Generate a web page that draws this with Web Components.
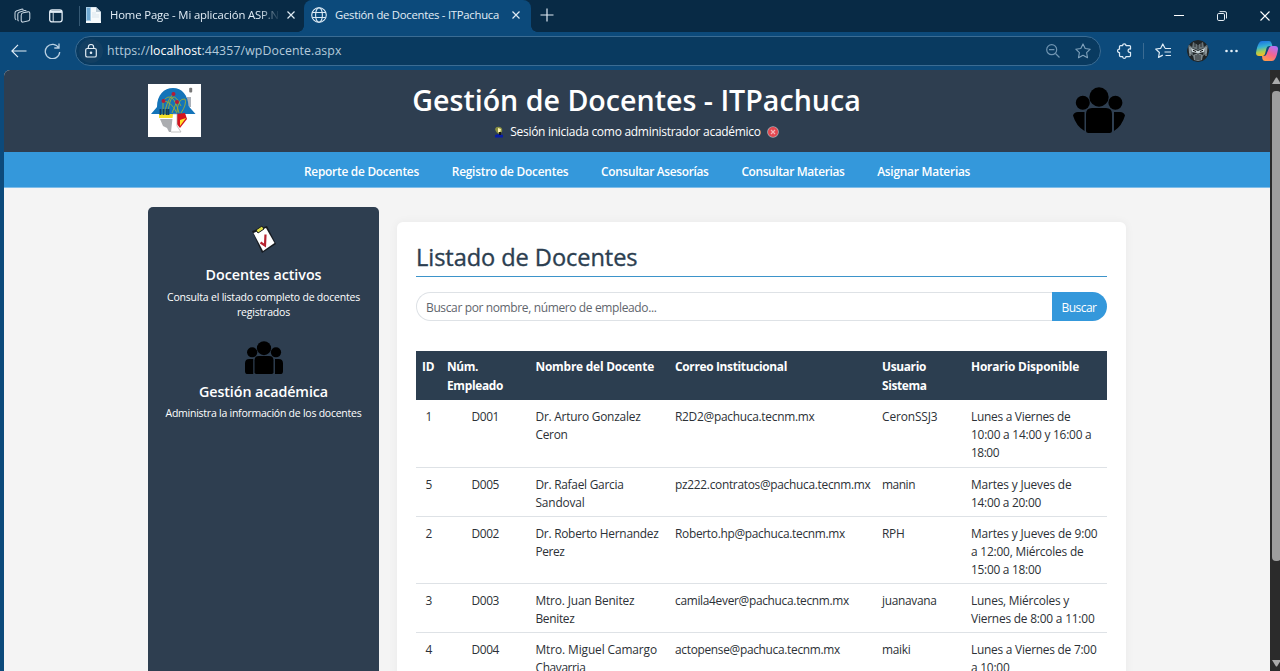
<!DOCTYPE html>
<html lang="es">
<head>
<meta charset="utf-8">
<title>Gestión de Docentes - ITPachuca</title>
<style>
html,body{margin:0;height:100%;overflow:hidden;background:#0c4a7b}
body{font-family:"Open Sans","Noto Sans",sans-serif;font-size:11.6px;color:#212529}
</style>
</head>
<body>
<browser-window>
  <tab-strip slot="chrome"></tab-strip>
  <address-bar slot="chrome"></address-bar>
  <docentes-page></docentes-page>
</browser-window>
<script>
class Base extends HTMLElement{
  constructor(){super();this.attachShadow({mode:'open'});}
  render(css,html){const t=document.createElement('template');t.innerHTML=`<style>*{box-sizing:border-box}svg{display:block;flex:none}${css}</style>${html}`;this.shadowRoot.replaceChildren(t.content.cloneNode(true));}
}
/* A single line of text whose tracking is tuned to a given measure. */
class FitText extends Base{
  connectedCallback(){
    this.render(':host{display:inline-block;white-space:nowrap;vertical-align:top;text-align:left}span{display:inline-block}','<span><slot></slot></span>');
    const w=+this.getAttribute('w');if(!w)return;
    const s=this.shadowRoot.querySelector('span');
    const nat=s.getBoundingClientRect().width,n=this.textContent.length;
    if(nat){s.style.letterSpacing=((w-nat)/n)+'px';this.style.width=w+'px';}
  }
}
customElements.define('fit-text',FitText);

const people=`<g fill="#000"><circle cx="26" cy="10" r="9.7"/><circle cx="9.8" cy="15.800" r="7"/><circle cx="42.400" cy="15.800" r="7"/>`;
class PeopleIcon extends Base{
  connectedCallback(){
    const round=this.hasAttribute('round');
    this.render(':host{display:block}svg{width:100%;height:100%}',`<svg viewBox="0 0 52 46" preserveAspectRatio="none">${people}<path d="M19 21h14q6 0 6 6v16.500q0 2.500-2.500 2.500h-21q-2.500 0-2.500-2.500V27q0-6 6-6z"/>${round?'<path d="M11.500 25v19Q3 39 0 28.500q1-3.500 5-3.500zM41 25v19q8-5 11-15.500-1-3.500-5-3.500z"/>':'<path d="M11.300 25v21H4q-4 0-4-4V31q0-6 6-6zM41 25v21h7q4 0 4-4V31q0-6-6-6z"/>'}</g></svg>`);
  }
}
customElements.define('people-icon',PeopleIcon);

class BrowserWindow extends Base{
  connectedCallback(){this.render(`:host{display:flex;flex-direction:column;width:1280px;height:671px;overflow:hidden;background:#0c4a7b}
  .view{flex:1;min-height:0;display:flex;padding-left:4px}.page{flex:1;overflow:hidden;border-top-left-radius:6px;background:#f4f4f4}
  .bar{width:10px;background:#2b2b2b;display:flex;flex-direction:column;padding:7px 0 2px 2px;overflow:hidden}
  .thumb{width:9px;height:470px;border-radius:4px;background:#9e9e9e;margin:7px 0 99px}`,
  `<slot name="chrome"></slot><div class="view"><div class="page"><slot></slot></div>
  <div class="bar"><svg width="9" height="7"><path d="M0 7L4 .5h1L9 7z" fill="#aaa"/></svg><div class="thumb"></div><svg width="9" height="7"><path d="M0 0h9L5 6.500H4z" fill="#aaa"/></svg></div></div>`);}
}
customElements.define('browser-window',BrowserWindow);

class TabStrip extends Base{
  connectedCallback(){this.render(`:host{display:flex;height:32px;flex:none;background:#082a45;color:#e2edf6;font-size:11.300px;line-height:16px}
  .tools{width:81px;display:flex;align-items:center;padding-left:14px;gap:18px}.sep{width:1px;height:20px;background:#365974;margin-left:-2px}
  .tab{display:flex;align-items:center;height:32px;padding-bottom:2px}
  .one{width:223px;padding-left:4px}.two{width:227px;background:#0c4a7b;border-radius:8px 8px 0 0;padding-left:7px;position:relative}
  .two:before,.two:after{content:"";position:absolute;bottom:0;width:6px;height:6px;background:radial-gradient(circle at 0 0,transparent 5.500px,#0c4a7b 6px)}
  .two:before{left:-6px}.two:after{right:-6px;background:radial-gradient(circle at 100% 0,transparent 5.500px,#0c4a7b 6px)}
  .fade{width:168px;margin-left:9px;overflow:hidden;-webkit-mask:linear-gradient(90deg,#000 150px,transparent 170px)}
  .win{margin-left:auto;display:flex;align-items:center}`,
  `<div class="tools"><svg width="17" height="16" viewBox="0 0 17 16" fill="none" stroke="#c6d5e1" stroke-width="1.050"><rect x="7.200" y="4.200" width="8.600" height="9.200" rx="2" transform="skewY(-12) translate(0 2.600)"/><path d="M4.600 13.200Q3.800 12.600 3.800 11.500V6.200Q3.800 4.800 5.200 4.300L10.500 2.500q1.200-.3 1.800.4M2.200 11.700Q1 11.200 1 9.700V4.900Q1 3.500 2.300 3L7.500 1.200q1.200-.3 1.900.4"/></svg>
  <svg width="14" height="14" viewBox="0 0 14 14" fill="none" stroke="#e4eef6" stroke-width="1.300"><rect x=".7" y=".9" width="12.400" height="12" rx="2.300"/><path d="M4.200 3.500V13" stroke-width=".9"/><path d="M1 2.700h12" stroke-width="2.400"/></svg><div class="sep"></div></div>
  <div class="tab one"><svg width="16" height="16" viewBox="0 0 16 16"><path d="M1 0h10l5 5v11H1z" fill="#dce8f0"/><path d="M1 0h5v14H1z" fill="#a9cde6"/><path d="M2 1h3v12H2z" fill="#6fa9d2"/><path d="M6 1h5v4h4v9H6z" fill="#f7fafc"/><path d="M7 6h4M7 8h7M7 10h7" stroke="#cddbe6" stroke-width=".7"/><path d="M11 0v5h5z" fill="#b9c9d5"/><path d="M1 14h15v2H1z" fill="#f6fafc"/></svg>
  <div class="fade"><fit-text w="169">Home Page - Mi aplicación ASP.N</fit-text></div><svg width="8" height="8" style="margin-left:9px" stroke="#dfeaf3" stroke-width="1.200"><path d="M.5.5l7 7M7.500.5l-7 7"/></svg></div>
  <div class="tab two"><svg width="16" height="16" viewBox="0 0 16 16" fill="none" stroke="#dceaf5" stroke-width="1.100"><circle cx="8" cy="8" r="7.300"/><ellipse cx="8" cy="8" rx="3.400" ry="7.300"/><path d="M1.300 5.500h13.400M1.300 10.500h13.400"/></svg><fit-text w="164" style="margin-left:8px">Gestión de Docentes - ITPachuca</fit-text><svg width="8" height="8" style="margin-left:13px" stroke="#dfeaf3" stroke-width="1.200"><path d="M.5.5l7 7M7.500.5l-7 7"/></svg></div>
  <svg width="14" height="14" style="margin:8px 0 0 9px" stroke="#dfeaf3" stroke-width="1.200"><path d="M7 .5v13M.5 7h13"/></svg>
  <div class="win"><svg width="10" height="10" stroke="#fff" stroke-width="1"><path d="M0 4.500h10"/></svg><svg width="10" height="10" viewBox="0 0 10 10" style="margin:0 33px" fill="none" stroke="#e6eef4"><rect x=".5" y="2.500" width="7" height="7" rx="1.300"/><path d="M2.500.6H8Q9.500.6 9.500 2v5.500"/></svg><svg width="10" height="10" style="margin-right:10px" stroke="#fff" stroke-width="1.100"><path d="M.5.5l9 9M9.500.5l-9 9"/></svg></div>`);}
}
customElements.define('tab-strip',TabStrip);

class AddressBar extends Base{
  connectedCallback(){this.render(`:host{display:flex;align-items:center;height:38px;flex:none;background:#0c4a7b;color:#b4cadb;font-size:12.300px;line-height:18px}
  .field{display:flex;align-items:center;margin-left:14px;width:1026px;height:30px;border:1px solid #3b6c93;border-radius:15px;background:#093a60;padding-left:3px}
  .lock{width:24px;height:24px;border-radius:50%;background:#133f62;display:grid;place-items:center;margin-right:4px}
  b{font-weight:400;color:#fff;display:inline-flex}.right{display:flex;margin-left:auto;align-items:center;padding-right:9px;gap:15px}
  .av{width:22px;height:22px;border-radius:50%;margin-left:15px}`,
  `<svg width="16" height="14" viewBox="0 0 16 14" style="margin-left:11px" fill="none" stroke="#e4eff8" stroke-width="1.150"><path d="M15.500 7H1M7 .8L.9 7 7 13.200"/></svg>
  <svg width="17" height="16" viewBox="0 0 17 16" style="margin-left:17px" fill="none" stroke="#b9d0e2" stroke-width="1.300"><path d="M14.800 5A7.200 7.200 0 1 0 15.700 9M15 .5V5h-4.700"/></svg>
  <div class="field"><div class="lock"><svg width="12" height="14" viewBox="0 0 12 14" fill="none" stroke="#e4edf4" stroke-width="1.200"><rect x=".7" y="4.500" width="10.600" height="8.500" rx="1.600"/><path d="M3.300 4.500V3.200a2.700 2.700 0 0 1 5.400 0v1.300"/><circle cx="6" cy="8.700" r=".7" fill="#e4edf4"/></svg></div>
  <fit-text w="43">https://</fit-text><b><fit-text w="51.500">localhost</fit-text></b><fit-text w="140">:44357/wpDocente.aspx</fit-text>
  <div class="right"><svg width="14" height="14" viewBox="0 0 14 14" fill="none" stroke="#6f94b1" stroke-width="1.200"><circle cx="5.700" cy="5.700" r="5"/><path d="M3 5.700h5.400M9.500 9.500l4 4"/></svg><svg width="16" height="16" viewBox="0 0 16 16" fill="none" stroke="#7fa1bb" stroke-width="1.100"><path d="M8 .9l2.200 4.600 5 .7-3.600 3.500.9 5L8 12.300l-4.500 2.400.9-5L.8 6.200l5-.7z" stroke-linejoin="round"/></svg></div></div>
  <svg width="15" height="16" viewBox="0 0 15 16" style="margin-left:16px" fill="none" stroke="#dceaf5" stroke-width="1.250" stroke-linejoin="round"><path d="M3.500 2.500h2.200c-.3-2.300 3.500-2.300 3.200 0h3.600q1 0 1 1v2.600c-3.200-.9-3.200 4.100 0 3.300v3.100q0 1-1 1H8.900c.3 2.500-3.500 2.500-3.200 0H3.500q-1 0-1-1V9.500c-2.600.2-2.600-3.500 0-3.300V3.500q0-1 1-1z"/></svg>
  <div style="width:1px;height:16px;background:#3b6b92;margin-left:11px"></div>
  <svg width="17" height="16" viewBox="0 0 17 16" style="margin-left:11px" fill="none" stroke="#dceaf5" stroke-width="1.200" stroke-linejoin="round"><path d="M10 5.200L7.800 1 5.700 5.300l-5 .7 3.700 3.500-.9 4.900 4.300-2.300M10 5.500h6M9.500 9H16M10.500 12.500H16"/></svg>
  <svg class="av" viewBox="0 0 22 22"><circle cx="11" cy="11" r="11" fill="#202527"/><path d="M1 4l4 3 1 9-4-3zM21 4l-4 3-1 9 4-3zM6 2l5 3 5-3 1 6-6 2-6-2z" fill="#697478"/><path d="M4 8l7 3 7-3-1 4-5 1h-2l-5-1z" fill="#c6d2d6"/><path d="M6 10.300l3 1.200M16 10.300l-3 1.200" stroke="#111"/><path d="M6 15l5-2 5 2-1 5-4 1-4-1z" fill="#7d888c"/><path d="M9 15v5M11 14v6M13 15v5M8 3v4M11 4v5M14 3v4" stroke="#151719" stroke-width=".8"/><path d="M3 7v9M19 7v9" stroke="#aeb6b9"/></svg>
  <svg width="13" height="4" style="margin-left:16px" fill="#e5f0f8"><circle cx="1.500" cy="2" r="1.300"/><circle cx="6.500" cy="2" r="1.300"/><circle cx="11.500" cy="2" r="1.300"/></svg>
  <svg width="22" height="20" viewBox="0 0 22 20" style="margin-left:18px"><defs><linearGradient id="a" x2=".2" y2="1"><stop stop-color="#1768e5"/><stop offset=".45" stop-color="#36b2d2"/><stop offset=".75" stop-color="#a6ce54"/><stop offset="1" stop-color="#f7bd26"/></linearGradient><linearGradient id="b" x1=".7" x2=".2" y2="1"><stop stop-color="#b371f6"/><stop offset=".5" stop-color="#f6658e"/><stop offset="1" stop-color="#ff9d46"/></linearGradient></defs><path d="M6 0h7q2 0 2.500 2l.8 3h-3q-2 0-2.700 2L9 13q-.7 2-2.500 2H3q-3 0-3-3Q1 5 3 2 4 0 6 0z" fill="url(#a)"/><path d="M16 20H9q-2 0-2.600-2L6 15h2q2 0 2.600-2L13 7q.8-2 2.500-2H19q3 0 3 3-1 7-3 10-1 2-3 2z" fill="url(#b)"/></svg>`);}
}
customElements.define('address-bar',AddressBar);

class SiteHeader extends Base{
  connectedCallback(){this.render(`:host{display:flex;height:82px;background:#2e3e50;padding:14px 145px 0 144px;color:#fff;justify-content:space-between}
  .mid{display:flex;flex-direction:column;align-items:center;margin-right:1px}
  h1{margin:-3px 0 0;font-size:28.600px;font-weight:600;line-height:38px;height:38px}.s{display:flex;align-items:center;font-size:12px;line-height:18px;margin-top:4px}
  people-icon{width:52px;height:46px;margin-top:3px}`,
  `<svg width="53" height="53" viewBox="0 0 53 53"><path fill="#fff" d="M0 0h53v53H0z"/><path d="M39 13h4v10h-4z" fill="#aab0b8"/><rect x="41.200" y="3.800" width="3" height="4.600" rx="1" fill="#777"/><path d="M3 30l6-7C9 11 16 4 25 4s15 7 15.500 18l7 8z" fill="#1474b9"/><path d="M12 35h13v13h-4l-2-4-4-2z" fill="#abadb0"/><path d="M11 30h15v4H11z" fill="#f5e12a"/><path d="M28 30l9-1 2 6-7 9-4-5z" fill="#d4131e"/><path d="M38 34l-6 8v-6z" fill="#ffe329"/><path d="M25 30h4v12l4 6H23" fill="#fff" stroke="#aaa" stroke-width=".7"/><g fill="none" stroke="#9fae32" stroke-width=".9"><path d="M15 30V17q10-12 16 12M15 17q8 0 14 12M20 29q3-28 13-7M25 10q-8 10-8 20M29 17l-5 12M29 28q1-14 8-13 2 5-4 14"/></g><g fill="#b51b36"><circle cx="15.500" cy="17" r="2"/><circle cx="25.500" cy="10" r="2"/><circle cx="29" cy="18" r="2"/></g><path d="M12.500 25v6M15.500 25v6M18.500 25v6M20.500 25v6" stroke="#123d5d" stroke-width="1.800"/></svg>
  <div class="mid"><h1><fit-text w="448.500">Gestión de Docentes - ITPachuca</fit-text></h1><div class="s"><svg width="10" height="12" viewBox="0 0 10 12"><path d="M1 3q1-3 5-2 3 1 2 5L5 8Q2 7 1 3z" fill="#8a9040"/><path d="M4 2l3 1-1 4-2-1z" fill="#fff4b0"/><path d="M1 9l4-1 4 1v2.500H1z" fill="#071ca4"/><path d="M5 6h2v3H5z" fill="#161616"/></svg><fit-text w="250.500" style="margin:0 6px 0 6px">Sesión iniciada como administrador académico</fit-text><svg width="12" height="12" viewBox="0 0 12 12"><circle cx="6" cy="6" r="5.800" fill="#a9b0b5"/><circle cx="6" cy="6" r="5" fill="#e34851"/><path d="M4 4l4 4M8 4L4 8" stroke="#f5b2b5" stroke-width="1.200"/></svg></div></div><people-icon round></people-icon>`);}
}
customElements.define('site-header',SiteHeader);

class SiteNav extends Base{
  connectedCallback(){this.render(`:host{display:flex;height:36px;background:#3498db;border-bottom:1px solid #7fbde9;color:#fff;font-size:11.900px;font-weight:600;line-height:18px;padding:10px 0 0 300px}fit-text{margin-right:32.800px}`,
  [['Reporte de Docentes',115],['Registro de Docentes',116.5],['Consultar Asesorías',107.5],['Consultar Materias',103],['Asignar Materias',93]].map(a=>`<fit-text w="${a[1]}">${a[0]}</fit-text>`).join(''));}
}
customElements.define('site-nav',SiteNav);

class SideCard extends Base{
  connectedCallback(){this.render(`:host{display:flex;flex-direction:column;align-items:center;color:#fff}.i{height:34px;display:flex;align-items:center}h5{margin:8px 0 var(--title-gap,5px);font-size:14.300px;font-weight:600;line-height:20px}.t{font-size:10.500px;line-height:15px;display:flex;flex-direction:column;align-items:center}`,
  `<div class="i"><slot name="icon"></slot></div><h5><slot name="title"></slot></h5><div class="t"><slot></slot></div>`);}
}
customElements.define('side-card',SideCard);

class SidePanel extends Base{
  connectedCallback(){this.render(`:host{display:flex;flex-direction:column;width:231px;background:#2e3e50;border-radius:5px 5px 0 0;padding-top:16.500px;gap:20px}people-icon{width:38px;height:33px}`,
  `<side-card><svg slot="icon" width="28" height="30" viewBox="0 0 28 30"><path d="M2 6L17 1l9 18-14 9z" fill="#171b20"/><path d="M3.500 8l12.500-5 8.500 15L13 26z" fill="#fff"/><path d="M6 5l6-4 2 3-6 4z" fill="#dedc45" stroke="#171b20"/><path d="M10.500 17.500l4.500 3 .5-11" fill="none" stroke="#b62330" stroke-width="2.200"/></svg><fit-text slot="title" w="116">Docentes activos</fit-text><fit-text w="193">Consulta el listado completo de docentes</fit-text><fit-text w="53">registrados</fit-text></side-card>
  <side-card style="--title-gap:3.500px"><people-icon slot="icon"></people-icon><fit-text slot="title" w="129">Gestión académica</fit-text><fit-text w="196">Administra la información de los docentes</fit-text></side-card>`);}
}
customElements.define('side-panel',SidePanel);

class SearchBox extends Base{
  connectedCallback(){this.render(`:host{display:flex;height:29.500px;font-size:12px;line-height:18px}.in{flex:1;border:1px solid #dee2e6;border-right:0;border-radius:15px 0 0 15px;padding:6px 0 0 9px;color:#5f666d}.go{width:55px;background:#3498db;color:#fff;border-radius:0 15px 15px 0;padding:7px 0 0 10px}`,
  `<div class="in"><fit-text w="230.500">Buscar por nombre, número de empleado...</fit-text></div><div class="go"><fit-text w="35">Buscar</fit-text></div>`);}
}
customElements.define('search-box',SearchBox);

/* Each cell is a list of [line, measure] pairs. */
const head=[[['ID',12.5]],[['Núm.',31],['Empleado',56]],[['Nombre del Docente',118.5]],[['Correo Institucional',112]],[['Usuario',44],['Sistema',44.5]],[['Horario Disponible',108]]];
const rows=[
 [[['1',6]],[['D001',27.5]],[['Dr. Arturo Gonzalez',105],['Ceron',32]],[['R2D2@pachuca.tecnm.mx',139.5]],[['CeronSSJ3',55.5]],[['Lunes a Viernes de',99.5],['10:00 a 14:00 y 16:00 a',120.5],['18:00',28]]],
 [[['5',6]],[['D005',27.5]],[['Dr. Rafael Garcia',88],['Sandoval',49]],[['pz222.contratos@pachuca.tecnm.mx',195.5]],[['manin',33]],[['Martes y Jueves de',100.5],['14:00 a 20:00',70]]],
 [[['2',6]],[['D002',27.5]],[['Dr. Roberto Hernandez',123],['Perez',29]],[['Roberto.hp@pachuca.tecnm.mx',170]],[['RPH',22.5]],[['Martes y Jueves de 9:00',126.5],['a 12:00, Miércoles de',112.5],['15:00 a 18:00',70]]],
 [[['3',6]],[['D003',27.5]],[['Mtro. Juan Benitez',99],['Benitez',39]],[['camila4ever@pachuca.tecnm.mx',174]],[['juanavana',54.5]],[['Lunes, Miércoles y',98],['Viernes de 8:00 a 11:00',123.5]]],
 [[['4',6]],[['D004',27.5]],[['Mtro. Miguel Camargo',121.5],['Chavarria',50]],[['actopense@pachuca.tecnm.mx',165]],[['maiki',28.5]],[['Lunes a Viernes de 7:00',125.5],['a 10:00',38.5]]]];
class TeacherTable extends Base{
  connectedCallback(){
    const row=(r,c)=>`<div class="row ${c}">${r.map(l=>`<div class="cell">${l.map(x=>`<fit-text w="${x[1]}">${x[0]}</fit-text>`).join('')}</div>`).join('')}</div>`;
    this.render(`:host{display:block;color:#2c3136;font-size:11.900px;line-height:18px}.row{display:grid;grid-template-columns:25px 88.500px 139.500px 207px 89px 142px;border-bottom:1px solid #dee2e6;padding:7px 0 5px}.cell{display:flex;flex-direction:column;padding-left:6px;align-items:flex-start}.body .cell:nth-child(-n+2){align-items:center;padding:0}
    .head + .body{padding-bottom:6px}.head{background:#2c3e50;color:#fff;font-weight:700;height:48.500px;line-height:19px;padding:6px 0 0;border:0}`,row(head,'head')+rows.map(r=>row(r,'body')).join(''));
  }
}
customElements.define('teacher-table',TeacherTable);

class ListPanel extends Base{
  connectedCallback(){this.render(`:host{display:block;width:728.500px;background:#fff;border-radius:6px 6px 0 0;box-shadow:0 0 10px rgba(0,0,0,.05);padding:18px 19px 0 19px;margin-top:15px;height:700px}
  h2{margin:0 0 15px;height:37px;border-bottom:1px solid #3d94ca;color:#2c3e50;font-size:23.600px;font-weight:500;-webkit-text-stroke:.35px #2c3e50;line-height:34px}search-box{margin-bottom:30px}`,
  `<h2><fit-text w="221.500">Listado de Docentes</fit-text></h2><search-box></search-box><teacher-table></teacher-table>`);}
}
customElements.define('list-panel',ListPanel);

class DocentesPage extends Base{
  connectedCallback(){this.render(`:host{display:flex;flex-direction:column;height:601px}.main{flex:1;min-height:0;display:flex;gap:18px;padding:18.500px 0 0 144px;overflow:hidden}side-panel{height:700px}`,
  `<site-header></site-header><site-nav></site-nav><div class="main"><side-panel></side-panel><list-panel></list-panel></div>`);}
}
customElements.define('docentes-page',DocentesPage);
</script>
</body>
</html>
